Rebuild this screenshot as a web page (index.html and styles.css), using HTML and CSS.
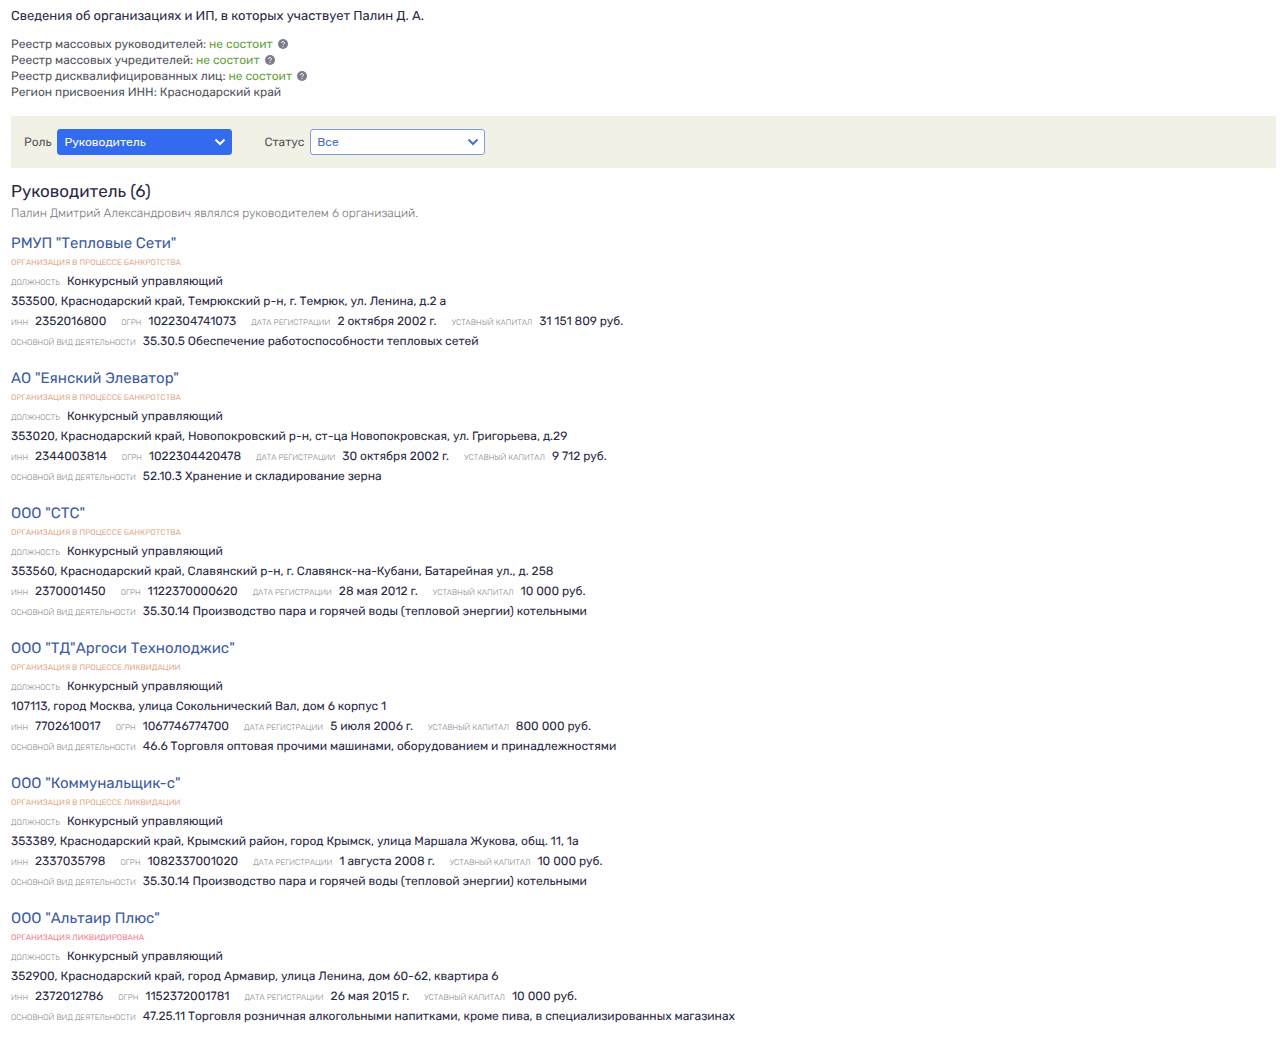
FILE: index.html
```html
<!DOCTYPE html>
<html lang="ru">
<head>
    <meta charset="UTF-8">
    <meta name="viewport" content="width=device-width, initial-scale=1.0">
    <title>Палин Д. А.</title>
    <link rel="stylesheet" href="styles.css">
</head>
<body>
    <header class="person">
        <h1 class="person-title">Сведения об организациях и ИП, в которых участвует Палин Д. А.</h1>
        <ul class="registry">
            <li>Реестр массовых руководителей: <span class="ok">не состоит</span> <button class="help" type="button" aria-label="Справка"><svg viewBox="0 0 10 10"><circle cx="5" cy="5" r="5"/><path d="M3.6 4a1.4 1.4 0 1 1 2.1 1.2Q5 5.5 5 6.2M5 7.2v1"/></svg></button></li>
            <li>Реестр массовых учредителей: <span class="ok">не состоит</span> <button class="help" type="button" aria-label="Справка"><svg viewBox="0 0 10 10"><circle cx="5" cy="5" r="5"/><path d="M3.6 4a1.4 1.4 0 1 1 2.1 1.2Q5 5.5 5 6.2M5 7.2v1"/></svg></button></li>
            <li>Реестр дисквалифицированных лиц: <span class="ok">не состоит</span> <button class="help" type="button" aria-label="Справка"><svg viewBox="0 0 10 10"><circle cx="5" cy="5" r="5"/><path d="M3.6 4a1.4 1.4 0 1 1 2.1 1.2Q5 5.5 5 6.2M5 7.2v1"/></svg></button></li>
            <li>Регион присвоения ИНН: Краснодарский край</li>
        </ul>
    </header>

    <form class="filters">
        <div class="filter">
            <label for="role">Роль</label>
            <div class="select select-filled">
                <select id="role">
                    <option>Руководитель</option>
                </select>
                <svg viewBox="0 0 12 8"><path d="M1.5 1.5L6 6l4.500-4.500"/></svg>
            </div>
        </div>
        <div class="filter">
            <label for="status">Статус</label>
            <div class="select">
                <select id="status">
                    <option>Все</option>
                </select>
                <svg viewBox="0 0 12 8"><path d="M1.5 1.5L6 6l4.500-4.500"/></svg>
            </div>
        </div>
    </form>

    <main>
        <h2 class="section-title">Руководитель (6)</h2>
        <p class="section-note">Палин Дмитрий Александрович являлся руководителем 6 организаций.</p>

        <article class="org">
            <h3 class="org-name"><a href="#">РМУП "Тепловые Сети"</a></h3>
            <p class="org-status">Организация в процессе банкротства</p>
            <dl class="org-row"><div><dt>Должность</dt><dd>Конкурсный управляющий</dd></div></dl>
            <p class="org-address">353500, Краснодарский край, Темрюкский р-н, г. Темрюк, ул. Ленина, д.2 а</p>
            <dl class="org-row">
                <div><dt>ИНН</dt><dd>2352016800</dd></div>
                <div><dt>ОГРН</dt><dd>1022304741073</dd></div>
                <div><dt>Дата регистрации</dt><dd>2 октября 2002 г.</dd></div>
                <div><dt>Уставный капитал</dt><dd>31 151 809 руб.</dd></div>
            </dl>
            <dl class="org-row"><div><dt>Основной вид деятельности</dt><dd>35.30.5 Обеспечение работоспособности тепловых сетей</dd></div></dl>
        </article>

        <article class="org">
            <h3 class="org-name"><a href="#">АО "Еянский Элеватор"</a></h3>
            <p class="org-status">Организация в процессе банкротства</p>
            <dl class="org-row"><div><dt>Должность</dt><dd>Конкурсный управляющий</dd></div></dl>
            <p class="org-address">353020, Краснодарский край, Новопокровский р-н, ст-ца Новопокровская, ул. Григорьева, д.29</p>
            <dl class="org-row">
                <div><dt>ИНН</dt><dd>2344003814</dd></div>
                <div><dt>ОГРН</dt><dd>1022304420478</dd></div>
                <div><dt>Дата регистрации</dt><dd>30 октября 2002 г.</dd></div>
                <div><dt>Уставный капитал</dt><dd>9 712 руб.</dd></div>
            </dl>
            <dl class="org-row"><div><dt>Основной вид деятельности</dt><dd>52.10.3 Хранение и складирование зерна</dd></div></dl>
        </article>

        <article class="org">
            <h3 class="org-name"><a href="#">ООО "СТС"</a></h3>
            <p class="org-status">Организация в процессе банкротства</p>
            <dl class="org-row"><div><dt>Должность</dt><dd>Конкурсный управляющий</dd></div></dl>
            <p class="org-address">353560, Краснодарский край, Славянский р-н, г. Славянск-на-Кубани, Батарейная ул., д. 258</p>
            <dl class="org-row">
                <div><dt>ИНН</dt><dd>2370001450</dd></div>
                <div><dt>ОГРН</dt><dd>1122370000620</dd></div>
                <div><dt>Дата регистрации</dt><dd>28 мая 2012 г.</dd></div>
                <div><dt>Уставный капитал</dt><dd>10 000 руб.</dd></div>
            </dl>
            <dl class="org-row"><div><dt>Основной вид деятельности</dt><dd>35.30.14 Производство пара и горячей воды (тепловой энергии) котельными</dd></div></dl>
        </article>

        <article class="org">
            <h3 class="org-name"><a href="#">ООО "ТД"Аргоси Технолоджис"</a></h3>
            <p class="org-status">Организация в процессе ликвидации</p>
            <dl class="org-row"><div><dt>Должность</dt><dd>Конкурсный управляющий</dd></div></dl>
            <p class="org-address">107113, город Москва, улица Сокольнический Вал, дом 6 корпус 1</p>
            <dl class="org-row">
                <div><dt>ИНН</dt><dd>7702610017</dd></div>
                <div><dt>ОГРН</dt><dd>1067746774700</dd></div>
                <div><dt>Дата регистрации</dt><dd>5 июля 2006 г.</dd></div>
                <div><dt>Уставный капитал</dt><dd>800 000 руб.</dd></div>
            </dl>
            <dl class="org-row"><div><dt>Основной вид деятельности</dt><dd>46.6 Торговля оптовая прочими машинами, оборудованием и принадлежностями</dd></div></dl>
        </article>

        <article class="org">
            <h3 class="org-name"><a href="#">ООО "Коммунальщик-с"</a></h3>
            <p class="org-status">Организация в процессе ликвидации</p>
            <dl class="org-row"><div><dt>Должность</dt><dd>Конкурсный управляющий</dd></div></dl>
            <p class="org-address">353389, Краснодарский край, Крымский район, город Крымск, улица Маршала Жукова, общ. 11, 1а</p>
            <dl class="org-row">
                <div><dt>ИНН</dt><dd>2337035798</dd></div>
                <div><dt>ОГРН</dt><dd>1082337001020</dd></div>
                <div><dt>Дата регистрации</dt><dd>1 августа 2008 г.</dd></div>
                <div><dt>Уставный капитал</dt><dd>10 000 руб.</dd></div>
            </dl>
            <dl class="org-row"><div><dt>Основной вид деятельности</dt><dd>35.30.14 Производство пара и горячей воды (тепловой энергии) котельными</dd></div></dl>
        </article>

        <article class="org">
            <h3 class="org-name"><a href="#">ООО "Альтаир Плюс"</a></h3>
            <p class="org-status closed">Организация ликвидирована</p>
            <dl class="org-row"><div><dt>Должность</dt><dd>Конкурсный управляющий</dd></div></dl>
            <p class="org-address">352900, Краснодарский край, город Армавир, улица Ленина, дом 60-62, квартира 6</p>
            <dl class="org-row">
                <div><dt>ИНН</dt><dd>2372012786</dd></div>
                <div><dt>ОГРН</dt><dd>1152372001781</dd></div>
                <div><dt>Дата регистрации</dt><dd>26 мая 2015 г.</dd></div>
                <div><dt>Уставный капитал</dt><dd>10 000 руб.</dd></div>
            </dl>
            <dl class="org-row"><div><dt>Основной вид деятельности</dt><dd>47.25.11 Торговля розничная алкогольными напитками, кроме пива, в специализированных магазинах</dd></div></dl>
        </article>
    </main>
</body>
</html>
```
FILE: styles.css
```css
* {
    box-sizing: border-box;
}

body {
    margin: 0;
    padding: 7px 4px 0 11px;
    font-family: Rubik, Roboto, sans-serif;
    font-size: 12px;
    line-height: 20px;
    text-rendering: geometricPrecision;
    color: #2a2a44;
    background-color: #fefefe;
}

h1, h2, h3, p, ul, dl, dd {
    margin: 0;
    padding: 0;
    font-weight: 400;
}

.person-title {
    font-size: 13px;
    line-height: 20px;
}

.registry {
    margin-top: 9px;
    list-style: none;
    line-height: 16px;
    color: #55555e;
}

.ok {
    color: #65a33c;
}

.help {
    width: 10px;
    height: 10px;
    margin-left: 2px;
    padding: 0;
    border: none;
    background: none;
    vertical-align: -1px;
    cursor: pointer;
}

.help svg {
    display: block;
    fill: #7b7d8c;
}

.help path {
    fill: none;
    stroke: #fff;
}

/* Filter bar */
.filters {
    display: flex;
    gap: 32px;
    margin-top: 16px;
    padding: 13px;
    background-color: #f1f1e5;
    color: #55555a;
}

.filter {
    display: flex;
    align-items: center;
    gap: 6px;
}

.select {
    position: relative;
    width: 175px;
    color: #4c6fc4;
}

.select select {
    display: block;
    width: 100%;
    height: 26px;
    padding: 0 6px;
    border: 1px solid #7f9be0;
    border-radius: 3px;
    background-color: #fff;
    color: inherit;
    font: inherit;
    appearance: none;
    cursor: pointer;
}

.select svg {
    position: absolute;
    top: 9px;
    right: 6px;
    width: 12px;
    height: 8px;
    fill: none;
    stroke: currentColor;
    stroke-width: 2;
    pointer-events: none;
}

.select-filled {
    color: #fff;
}

.select-filled select {
    border-color: #336bee;
    background-color: #336bee;
}

.section-title {
    margin-top: 12px;
    font-size: 17px;
    line-height: 24px;
}

.section-note {
    font-weight: 300;
    line-height: 18px;
    color: #77777c;
}

/* Organizations */
.org {
    margin-top: 9px;
}

.org + .org {
    margin-top: 15px;
}

.org-name {
    font-size: 15px;
    line-height: 24px;
}

.org-name a {
    color: #3f5c9f;
    text-decoration: none;
}

.org-status {
    font-size: 8px;
    line-height: 16px;
    text-transform: uppercase;
    color: #dfae8f;
}

.org-status.closed {
    color: #ee868d;
}

.org-row {
    display: flex;
    flex-wrap: wrap;
    column-gap: 15px;
}

.org-row div {
    display: flex;
    align-items: baseline;
    gap: 7px;
}

.org-row dt {
    font-size: 8px;
    font-weight: 300;
    line-height: 12px;
    text-transform: uppercase;
    color: #85858c;
}
```
